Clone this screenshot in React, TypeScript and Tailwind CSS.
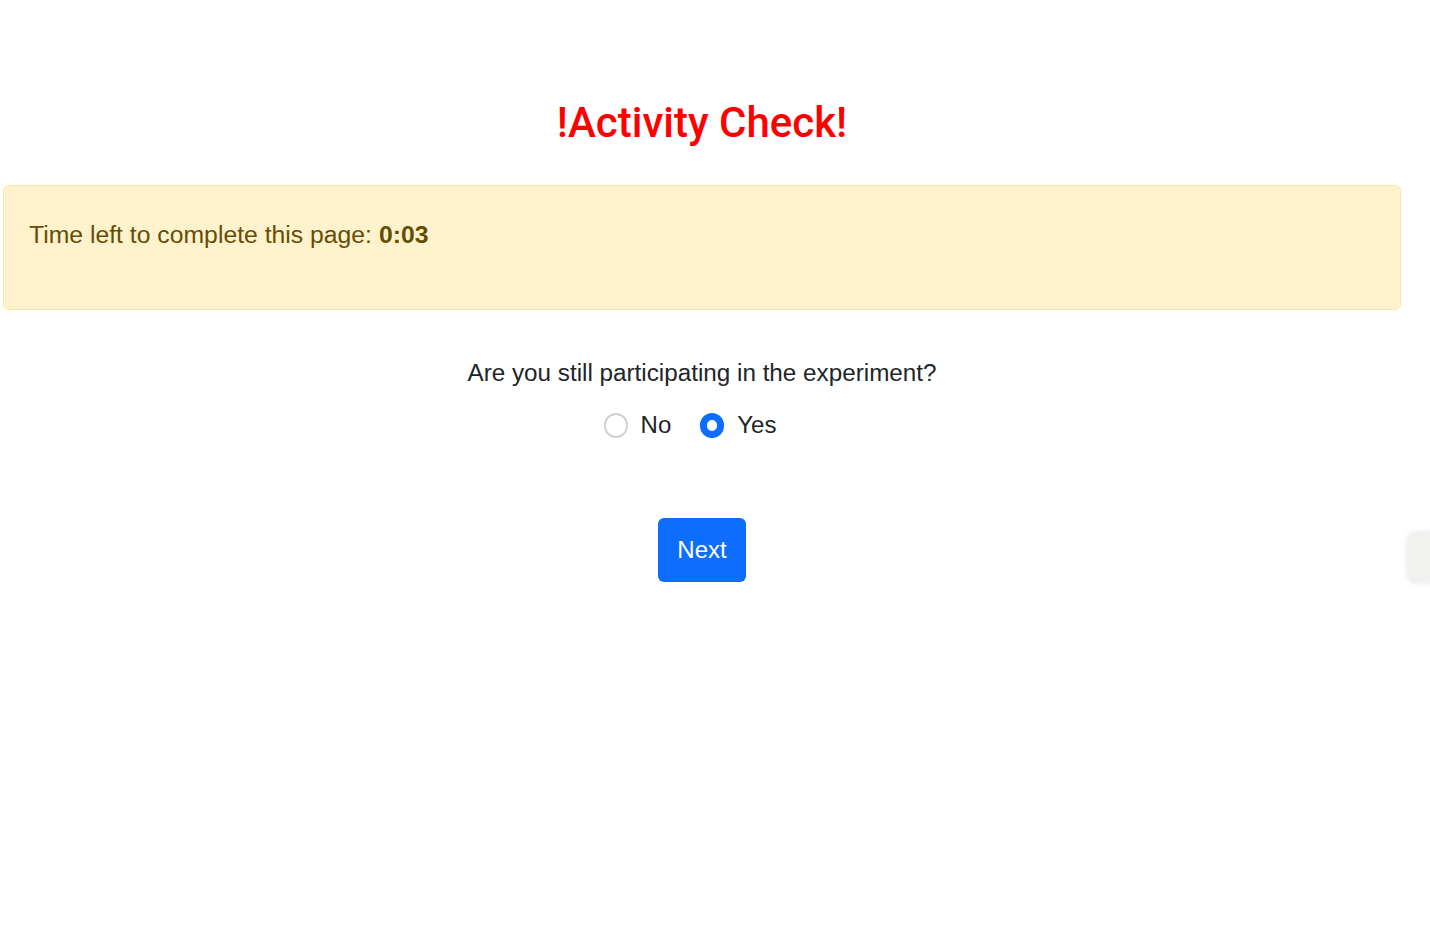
import { useState } from "react";

function Radio({ checked, label, onSelect }: { checked: boolean; label: string; onSelect: () => void }) {
  return (
    <label className="flex items-center gap-[13px] cursor-pointer" onClick={onSelect}>
      <span
        className={`flex items-center justify-center w-[24px] h-[25px] rounded-full ${
          checked ? "bg-[#0d6efd] border-2 border-[#0d6efd]" : "bg-white border-2 border-[#d2d2d2]"
        }`}
      >
        {checked && <span className="w-[10px] h-[11px] rounded-full bg-white" />}
      </span>
      <span>{label}</span>
    </label>
  );
}

export default function App() {
  const [answer, setAnswer] = useState<"no" | "yes">("yes");

  return (
    <div className="relative min-h-[935px] w-full bg-white overflow-hidden font-['Liberation_Sans',Arial,sans-serif] text-[#212529]">
      <div className="ml-[3px] w-[1398px] flex flex-col items-center pt-[95px]">
        <h1 className="font-['Roboto',sans-serif] font-medium text-[42px] leading-[56px] text-[#ff0000]">
          !Activity Check!
        </h1>

        {/* Timer alert */}
        <div className="self-stretch mt-[34px] h-[125px] rounded-md border border-[#ffe6a0] bg-[#fff3cd] px-[25px] pt-[31px] text-[#664d03] text-[24.75px] leading-9">
          Time left to complete this page: <span className="font-bold">0:03</span>
        </div>

        <p className="mt-[45px] text-[24.25px] leading-9">Are you still participating in the experiment?</p>

        <div className="mt-[16px] flex items-center gap-[29px] pr-[24px] text-[24px] leading-9">
          <Radio checked={answer === "no"} label="No" onSelect={() => setAnswer("no")} />
          <Radio checked={answer === "yes"} label="Yes" onSelect={() => setAnswer("yes")} />
        </div>

        <button className="mt-[75px] w-[88px] h-[64px] rounded-md bg-[#0d6efd] text-white text-[24px] leading-9">
          Next
        </button>
      </div>

      {/* floating side tab */}
      <div className="absolute left-[1408px] top-[533px] w-[40px] h-[49px] rounded-lg bg-[#f1f1ef] shadow-[0_0_6px_rgba(0,0,0,0.12)]" />
    </div>
  );
}
